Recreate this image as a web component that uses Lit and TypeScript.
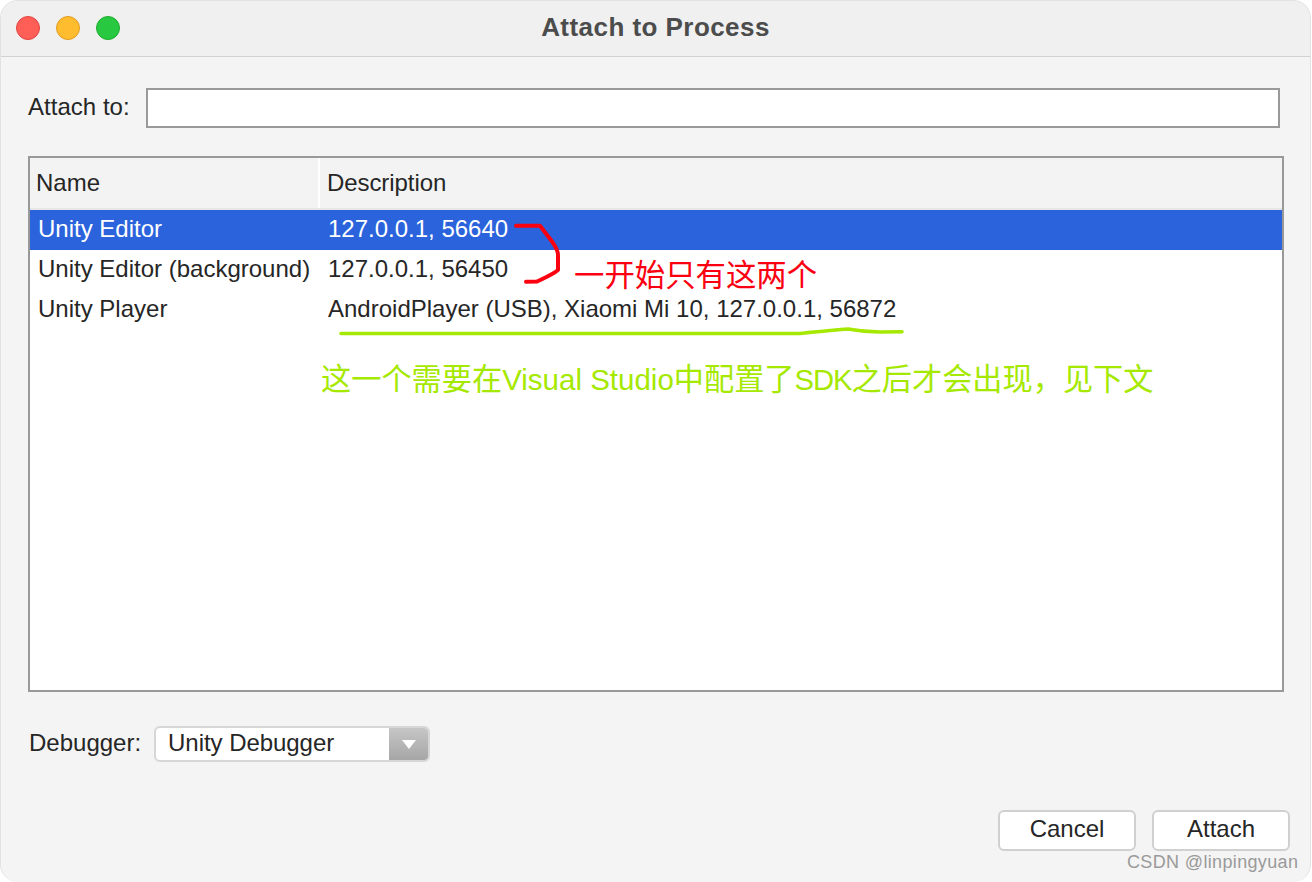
import { LitElement, html, css } from "lit";
import { customElement } from "lit/decorators.js";

@customElement("app-root")
export class AppRoot extends LitElement {
  static styles = css`
    :host {
      display: block;
      width: 1312px;
      height: 882px;
      background: #fff;
      font-family: "Liberation Sans", "Noto Sans CJK SC", sans-serif;
      color: #262626;
      font-size: 24px;
    }
    .window {
      position: relative;
      box-sizing: border-box;
      width: 1311px;
      height: 882px;
      background: #f4f4f4;
      border-radius: 18px;
      border: 1px solid #e2e2e2;
      border-width: 1px 1px 0 1px;
      overflow: hidden;
      display: flex;
      flex-direction: column;
    }
    .titlebar {
      flex: none;
      height: 56px;
      box-sizing: border-box;
      background: #f0f0f0;
      border-bottom: 1px solid #d2d2d2;
      position: relative;
      display: flex;
      align-items: center;
      justify-content: center;
    }
    .lights {
      position: absolute;
      left: 15px;
      top: 15px;
      display: flex;
      gap: 16px;
    }
    .light {
      width: 24px;
      height: 24px;
      border-radius: 50%;
      box-sizing: border-box;
      border: 1px solid;
    }
    .red { background: #ff5f57; border-color: #e5443e; }
    .yellow { background: #febc2e; border-color: #df9d20; }
    .green { background: #28c840; border-color: #1fad2e; }
    .title {
      font-weight: 700;
      font-size: 26px;
      color: #4c4c4c;
      letter-spacing: 0.45px;
      margin-top: -2px;
    }
    .body {
      flex: 1;
      display: flex;
      flex-direction: column;
      padding: 31px 26px 0 28px;
      min-height: 0;
    }
    .attach-row {
      display: flex;
      align-items: center;
      height: 40px;
      gap: 16px;
      padding-right: 4px;
    }
    .attach-row label { margin: -2px 0 0 -1px; letter-spacing: 0.03px; }
    .input {
      flex: 1;
      height: 40px;
      box-sizing: border-box;
      background: #fff;
      border: 2px solid #999;
    }
    .table {
      margin: 28px 0 0 -1px;
      height: 536px;
      box-sizing: border-box;
      border: 2px solid #999;
      background: #fff;
      display: flex;
      flex-direction: column;
    }
    .thead {
      flex: none;
      height: 52px;
      box-sizing: border-box;
      background: #f3f3f3;
      border-bottom: 2px solid #e6e6e6;
      display: grid;
      grid-template-columns: 288px 1fr;
      align-items: stretch;
    }
    .th {
      display: flex;
      align-items: center;
      padding-left: 6px;
      padding-bottom: 1px;
    }
    .th + .th {
      border-left: 2px solid #fff;
      padding-left: 7px;
      letter-spacing: -0.08px;
    }
    .row {
      height: 40px;
      display: grid;
      grid-template-columns: 288px 1fr;
      align-items: center;
    }
    .row > span { padding-left: 8px; padding-bottom: 2px; white-space: nowrap; }
    .row > span + span { padding-left: 10px; }
    .row.sel { background: #2a63dc; color: #fff; }
    .debugger-row {
      margin: 34px 0 0 0;
      display: flex;
      align-items: center;
      gap: 13px;
      height: 36px;
    }
    .debugger-row label { margin-top: -2px; }
    .select {
      width: 276px;
      height: 36px;
      box-sizing: border-box;
      border: 2px solid #d6d6d6;
      border-radius: 6px;
      background: #fff;
      display: flex;
      overflow: hidden;
    }
    .select .val { flex: 1; padding-left: 12px; line-height: 29px; letter-spacing: -0.05px; }
    .select .arrow {
      width: 39px;
      background: linear-gradient(#c6c6c6, #a6a6a6);
      display: flex;
      align-items: center;
      justify-content: center;
    }
    .buttons {
      margin-top: 48px;
      display: flex;
      justify-content: flex-end;
      gap: 16px;
      margin-right: -6px;
    }
    .btn {
      width: 138px;
      height: 41px;
      box-sizing: border-box;
      border: 2px solid #d0d0d0;
      border-radius: 6px;
      background: #fff;
      display: flex;
      align-items: center;
      justify-content: center;
      padding-bottom: 3px;
    }
    .annot {
      position: absolute;
      left: -1px;
      top: -1px;
      width: 1312px;
      height: 882px;
      pointer-events: none;
    }
    .note {
      position: absolute;
      white-space: nowrap;
      line-height: 36px;
    }
    .note.r { left: 573px; top: 256px; color: #fa0010; font-size: 30.4px; }
    .note.g { left: 320px; top: 361px; color: #a5e800; font-size: 30.2px; }
    .lat { font-size: 29.5px; }
    .sdk { font-size: 29.2px; letter-spacing: -1px; }
    .wm {
      position: absolute;
      left: 1126px;
      top: 851px;
      font-size: 18px;
      color: #9a9a9a;
      letter-spacing: 0.35px;
      white-space: nowrap;
    }
  `;

  render() {
    return html`
      <div class="window">
        <div class="titlebar">
          <div class="lights">
            <div class="light red"></div>
            <div class="light yellow"></div>
            <div class="light green"></div>
          </div>
          <div class="title">Attach to Process</div>
        </div>
        <div class="body">
          <div class="attach-row">
            <label>Attach to:</label>
            <div class="input"></div>
          </div>
          <div class="table">
            <div class="thead">
              <div class="th">Name</div>
              <div class="th">Description</div>
            </div>
            <div class="row sel"><span>Unity Editor</span><span>127.0.0.1, 56640</span></div>
            <div class="row"><span>Unity Editor (background)</span><span>127.0.0.1, 56450</span></div>
            <div class="row"><span>Unity Player</span><span>AndroidPlayer (USB), Xiaomi Mi 10, 127.0.0.1, 56872</span></div>
          </div>
          <div class="debugger-row">
            <label>Debugger:</label>
            <div class="select">
              <div class="val">Unity Debugger</div>
              <div class="arrow">
                <svg width="14" height="9" viewBox="0 0 14 9"><path d="M0 0H14L7 9Z" fill="#fff"/></svg>
              </div>
            </div>
          </div>
          <div class="buttons">
            <div class="btn">Cancel</div>
            <div class="btn">Attach</div>
          </div>
        </div>
        <svg class="annot" viewBox="0 0 1312 882" fill="none" stroke-linecap="round" stroke-linejoin="round">
          <path d="M516 225.700H540L552 241.500C556 247 558 251 558 255V270C552 275 544 278 537 281.500L526 281.700" stroke="#fa0010" stroke-width="4"/>
          <path d="M341 333.500H800C815 332 832 330 848 329C856 330.500 868 332 880 332L902 331.700" stroke="#a5e800" stroke-width="3.6"/>
        </svg>
        <div class="note r">一开始只有这两个</div>
        <div class="note g">这一个需要在<span class="lat">Visual Studio</span>中配置了<span class="sdk">SDK</span>之后才会出现，见下文</div>
        <div class="wm">CSDN @linpingyuan</div>
      </div>
    `;
  }
}
